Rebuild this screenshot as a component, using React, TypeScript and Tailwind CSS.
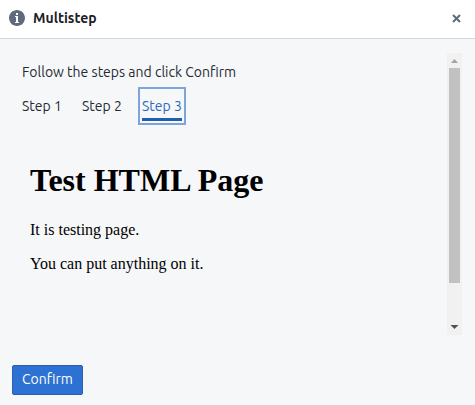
import React from 'react';

function InfoIcon() {
  return (
    <svg width="16" height="16" viewBox="0 0 16 16" className="mb-[2px] block shrink-0">
      <path
        fillRule="evenodd"
        clipRule="evenodd"
        d="M8 0C3.58 0 0 3.58 0 8s3.58 8 8 8 8-3.58 8-8-3.58-8-8-8zM7 3h2v2H7V3zm3 10H6v-1h1V7H6V6h3v6h1v1z"
        fill="#5f6b7c"
      />
    </svg>
  );
}

function Scrollbar() {
  return (
    <div className="flex h-[282px] w-[15px] shrink-0 flex-col items-center bg-[#f1f1f1]">
      <svg width="15" height="15" viewBox="0 0 15 15" className="block shrink-0">
        <path d="M4 10L7.5 6L11 10z" fill="#a3a3a3" />
      </svg>
      <div className="h-[215px] w-[11px] bg-[#c1c1c1]" />
      <svg width="15" height="15" viewBox="0 0 15 15" className="mt-auto block shrink-0">
        <path d="M3.5 5L7.5 9L11.5 5z" fill="#505050" />
      </svg>
    </div>
  );
}

export default function App() {
  return (
    <div className="flex h-[405px] w-[475px] flex-col overflow-hidden bg-[#f6f7f9] font-['Ubuntu','Noto_Sans',sans-serif] text-[14px] leading-[20px] text-[#252a31]">
      <header className="flex h-[39px] shrink-0 items-center border-b border-[#d1d5da] bg-white pl-[9px] pr-[14px]">
        <InfoIcon />
        <h1 className="ml-2 mb-[2px] whitespace-nowrap font-semibold text-[#1c2127]">Multistep</h1>
        <button aria-label="Close" className="ml-auto mb-[2px]">
          <svg width="9" height="9" viewBox="0 0 9 9" className="block">
            <path d="M1 1L8 8M8 1L1 8" stroke="#5f6b7c" strokeWidth="2" />
          </svg>
        </button>
      </header>
      <main className="flex pl-[22px] pr-[13px] pt-[14px]">
        <section className="min-w-0 flex-1 pt-[9px]">
          <p>Follow the steps and click Confirm</p>
          <nav className="mt-[5px] flex h-[38px] whitespace-nowrap">
            <div className="mr-5 w-10 pt-[9px]">Step 1</div>
            <div className="mr-4 w-10 pt-[9px]">Step 2</div>
            <div className="w-12 border-2 border-[#7ea5db] px-[2px] pt-[7px] text-[#2d69bd]">
              Step 3
              <div className="mt-[2px] h-[3px] w-10 bg-[#215db0]" />
            </div>
          </nav>
          <article className="pl-2 pt-[37px] font-['Liberation_Serif',serif] text-[16px] leading-[18px] text-black">
            <h2 className="text-[32px] font-bold leading-[37px]">Test HTML Page</h2>
            <p className="mt-[22px]">It is testing page.</p>
            <p className="mt-4">You can put anything on it.</p>
          </article>
        </section>
        <Scrollbar />
      </main>
      <footer className="mt-[30px] pl-3">
        <button className="flex h-[30px] w-[71px] justify-center rounded-[2px] border border-[#285fae] bg-[#2d72d2] pt-[3px] text-white">
          Confirm
        </button>
      </footer>
    </div>
  );
}
